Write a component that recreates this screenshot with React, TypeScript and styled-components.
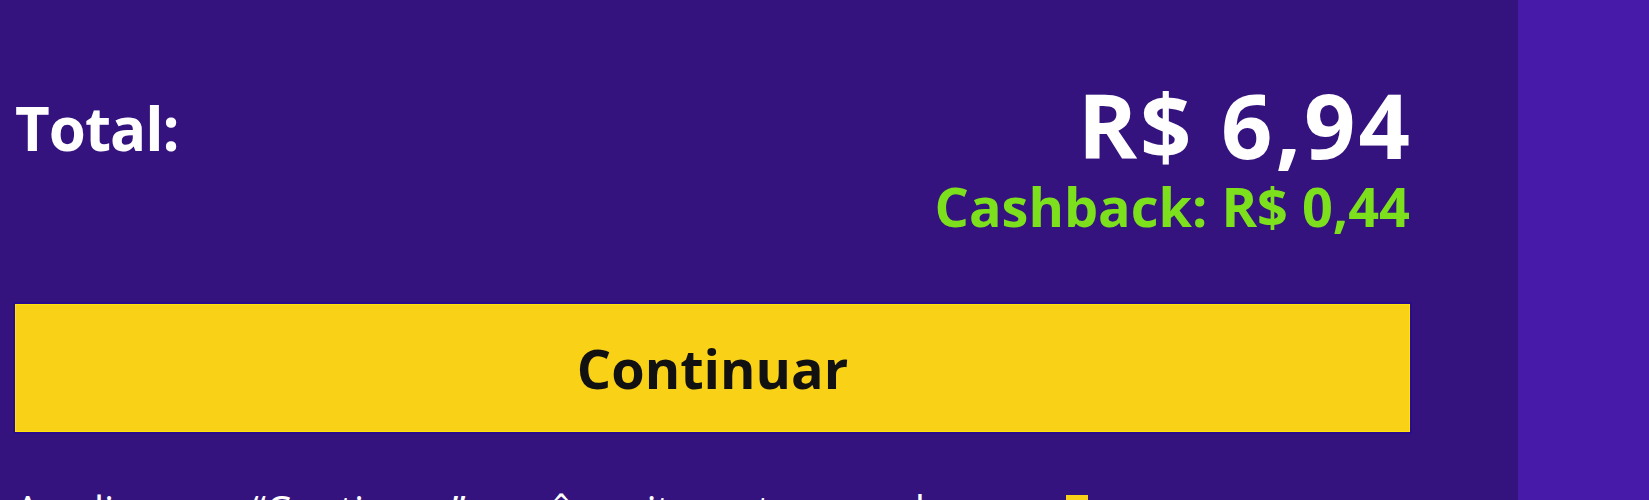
import styled, { createGlobalStyle } from "styled-components";

const GlobalStyle = createGlobalStyle`
  html, body {
    margin: 0;
    padding: 0;
    background: #481aa9;
    overflow: hidden;
  }
  body {
    font-family: "Open Sans", "Liberation Sans", sans-serif;
  }
`;

export default function App() {
  return (
    <>
      <GlobalStyle />
      <Page>
        <Panel>
          <SummaryRow>
            <TotalLabel>Total:</TotalLabel>
            <Amounts>
              <Price>R$ 6,94</Price>
              <Cashback>Cashback: R$ 0,44</Cashback>
            </Amounts>
          </SummaryRow>
          <ContinueButton type="button">Continuar</ContinueButton>
          <Disclaimer>
            Ao clicar em “Continuar”, você aceita os termos de uso<Badge />
          </Disclaimer>
        </Panel>
      </Page>
    </>
  );
}

const Page = styled.div`
  display: flex;
  height: 500px;
  background: #481aa9;
`;

const Panel = styled.div`
  width: 1518px;
  height: 500px;
  box-sizing: border-box;
  padding: 75px 108px 0 15px;
  background: #35137e;
  display: flex;
  flex-direction: column;
  overflow: hidden;
`;

const SummaryRow = styled.div`
  display: flex;
  justify-content: space-between;
  align-items: flex-start;
  flex-shrink: 0;
`;

const TotalLabel = styled.div`
  margin-top: 23px;
  font-size: 60px;
  line-height: 1;
  font-weight: 700;
  letter-spacing: -1px;
  color: #ffffff;
`;

const Amounts = styled.div`
  display: flex;
  flex-direction: column;
  align-items: flex-end;
`;

const Price = styled.div`
  font-size: 90px;
  line-height: 1.1;
  font-weight: 700;
  letter-spacing: 3px;
  margin-right: -3px;
  color: #ffffff;
`;

const Cashback = styled.div`
  margin-top: 3px;
  font-size: 54px;
  line-height: 1.1;
  font-weight: 700;
  color: #7de01c;
`;

const ContinueButton = styled.button`
  flex-shrink: 0;
  margin-top: 68px;
  height: 128px;
  width: 100%;
  padding: 0;
  border: 1px solid #ffe20a;
  outline: 2px solid #2a0c8c;
  background: #f9d117;
  color: #111111;
  font-family: "Open Sans", "Liberation Sans", sans-serif;
  font-size: 54px;
  font-weight: 700;
  cursor: pointer;
`;

const Disclaimer = styled.p`
  flex-shrink: 0;
  margin: 58px 0 0;
  font-size: 40px;
  line-height: 1;
  font-weight: 400;
  color: #ffffff;
  white-space: nowrap;
`;

const Badge = styled.span`
  display: inline-block;
  margin-left: 40px;
  width: 22px;
  height: 30px;
  background: #f9d117;
  vertical-align: baseline;
`;
